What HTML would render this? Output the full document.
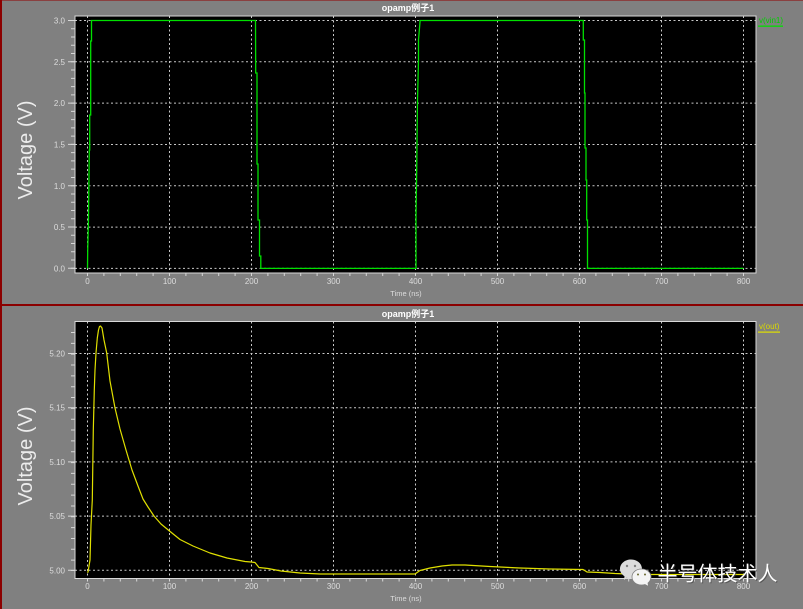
<!DOCTYPE html>
<html><head><meta charset="utf-8"><style>
html,body{margin:0;padding:0;background:#808080}
svg{display:block;filter:blur(.3px)}
text{font-family:"Liberation Sans","Noto Sans CJK SC",sans-serif}
.t{font-size:8px;fill:#dcdcdc}
.ttl{font-size:9px;font-weight:bold;fill:#fff;text-anchor:middle}
.yl{font-size:20px;fill:#ececec;text-anchor:middle}
.g{stroke:#c8c8c8;stroke-width:1;stroke-dasharray:2 2.5;fill:none}
</style></head><body>
<svg width="803" height="609" viewBox="0 0 803 609" xmlns="http://www.w3.org/2000/svg">
<rect width="803" height="609" fill="#808080"/>
<rect x="0" y="0" width="803" height="1" fill="#8a4040"/>
<rect x="0" y="0" width="2" height="609" fill="#8b0000"/>
<rect x="0" y="304" width="803" height="2" fill="#8b0000"/>

<!-- plot 1 -->
<rect x="75" y="16" width="681" height="257" fill="#000"/>
<path class="g" d="M87.5 16V273M169.5 16V273M251.5 16V273M333.5 16V273M415.5 16V273M497.5 16V273M579.5 16V273M661.5 16V273M743.5 16V273"/>
<path class="g" d="M75 20.500H756M75 61.800H756M75 103.100H756M75 144.500H756M75 185.800H756M75 227.100H756M75 268.400H756"/>
<rect x="75" y="16" width="681" height="257" fill="none" stroke="#d8d8d8" stroke-width="1"/>
<path d="M73 20V269" stroke="#d8d8d8" stroke-width="4" stroke-dasharray="1 7.26" fill="none"/>
<path d="M71.500 20V269" stroke="#d8d8d8" stroke-width="7" stroke-dasharray="1 40.3" fill="none"/>
<path d="M87 274.500H745" stroke="#d8d8d8" stroke-width="3" stroke-dasharray="1 15.4" fill="none"/>
<path fill="none" stroke="#00e000" stroke-width="1.300" d="M87.500 268.400L87.700 250L88.500 218L89.300 150H89.700V115H90.700V41H91.500V20.500H255.500L255.700 73H257V164H258V220H259.500V256H260.800V268.400H416V216L416.700 170L417.500 100L418.500 60V40L420 22V20.500H583.300V40H584.500V93H585V148H586V180H586.700V220H587.500V268.400H743.500"/>
<text class="ttl" x="408" y="11">opamp例子1</text>
<text class="yl" transform="translate(32,150) rotate(-90)">Voltage (V)</text>
<g class="t" text-anchor="end">
<text x="65" y="23.500">3.0</text><text x="65" y="64.800">2.5</text><text x="65" y="106.100">2.0</text><text x="65" y="147.500">1.5</text><text x="65" y="188.800">1.0</text><text x="65" y="230.100">0.5</text><text x="65" y="271.400">0.0</text>
</g>
<g class="t" text-anchor="middle">
<text x="87.500" y="284">0</text><text x="169.500" y="284">100</text><text x="251.500" y="284">200</text><text x="333.500" y="284">300</text><text x="415.500" y="284">400</text><text x="497.500" y="284">500</text><text x="579.500" y="284">600</text><text x="661.500" y="284">700</text><text x="743.500" y="284">800</text>
<text x="406" y="296" style="font-size:7.5px">Time (ns)</text>
</g>
<text x="759" y="23" style="font-size:8px;fill:#00d000">v(vin1)</text>
<rect x="758" y="25.500" width="25" height="1.300" fill="#00e000"/>

<!-- plot 2 -->
<rect x="75" y="321.500" width="681" height="257" fill="#000"/>
<path class="g" d="M87.500 321.500V578.500M169.500 321.500V578.500M251.500 321.500V578.500M333.500 321.500V578.500M415.500 321.500V578.500M497.500 321.500V578.500M579.500 321.500V578.500M661.500 321.500V578.500M743.500 321.500V578.500"/>
<path class="g" d="M75 353.500H756M75 407.700H756M75 461.900H756M75 516.100H756M75 570.300H756"/>
<rect x="75" y="321.500" width="681" height="257" fill="none" stroke="#d8d8d8" stroke-width="1"/>
<path d="M73 332V571" stroke="#d8d8d8" stroke-width="4" stroke-dasharray="1 9.84" fill="none"/>
<path d="M71.500 353V571" stroke="#d8d8d8" stroke-width="7" stroke-dasharray="1 53.2" fill="none"/>
<path d="M87 580H745" stroke="#d8d8d8" stroke-width="3" stroke-dasharray="1 15.4" fill="none"/>
<path fill="none" stroke="#e0e000" stroke-width="1.200" stroke-linejoin="round" d="M87.500 572.700L88 572L90 560L91 525L92.300 500L93.300 430L94.300 390L95 370L96 353L97.300 338L98.500 330L99.500 326.500L100.500 326L102 328L104 340L106.700 353L110 381L115 408L120 429L126 450L132 470L138 486L143 499L148 507L154 516L161 524L169.500 531L180 539.500L193 546L210 553L227 558L245 561.500L251 562L255 562.500L259 567.500L268 568.500L281 571L300 573L320 574H415L420 570.500L430 568L442 566L452 565H465L490 566.500L520 568L550 569L583 569.500L587 572L600 572.500L615 573.500L640 574.500H745"/>
<text class="ttl" x="408" y="317">opamp例子1</text>
<text class="yl" transform="translate(32,456) rotate(-90)">Voltage (V)</text>
<g class="t" text-anchor="end">
<text x="65" y="356.500">5.20</text><text x="65" y="410.700">5.15</text><text x="65" y="464.900">5.10</text><text x="65" y="519.100">5.05</text><text x="65" y="573.300">5.00</text>
</g>
<g class="t" text-anchor="middle">
<text x="87.500" y="589">0</text><text x="169.500" y="589">100</text><text x="251.500" y="589">200</text><text x="333.500" y="589">300</text><text x="415.500" y="589">400</text><text x="497.500" y="589">500</text><text x="579.500" y="589">600</text><text x="661.500" y="589">700</text><text x="743.500" y="589">800</text>
<text x="406" y="601" style="font-size:7.5px">Time (ns)</text>
</g>
<text x="759" y="329" style="font-size:8px;fill:#d8d800">v(out)</text>
<rect x="758" y="331.500" width="22" height="1.200" fill="#e0e000"/>

<!-- watermark -->
<path d="M620 569c0-5.500 5-9.500 11-9.500s11 4 11 9.500c0 5.500-5 9.500-11 9.500c-1.500 0-3-.2-4.300-.7L624 580l.5-3.800C621.800 574.500 620 572 620 569z" fill="#dcdcdc"/>
<circle cx="627" cy="566" r="1.200" fill="#808080"/><circle cx="635" cy="566" r="1.200" fill="#808080"/>
<path d="M632 577c0-4.500 4-8 9.500-8s9.500 3.500 9.500 8c0 2.500-1.200 4.500-3 6l.6 3.500L645 584.500c-1 .3-2.200.5-3.500.5C636 585 632 581.500 632 577z" fill="#f4f4f4" stroke="#808080" stroke-width=".8"/>
<circle cx="638" cy="574.500" r="1" fill="#6a6a30"/><circle cx="645" cy="574.500" r="1" fill="#6a6a30"/>
<text x="658.500" y="581.500" style="font-size:20px;fill:#404040;opacity:.6">半号体技术人</text>
<text x="657.500" y="580.500" style="font-size:20px;fill:#fff">半号体技术人</text>
</svg>
</body></html>
